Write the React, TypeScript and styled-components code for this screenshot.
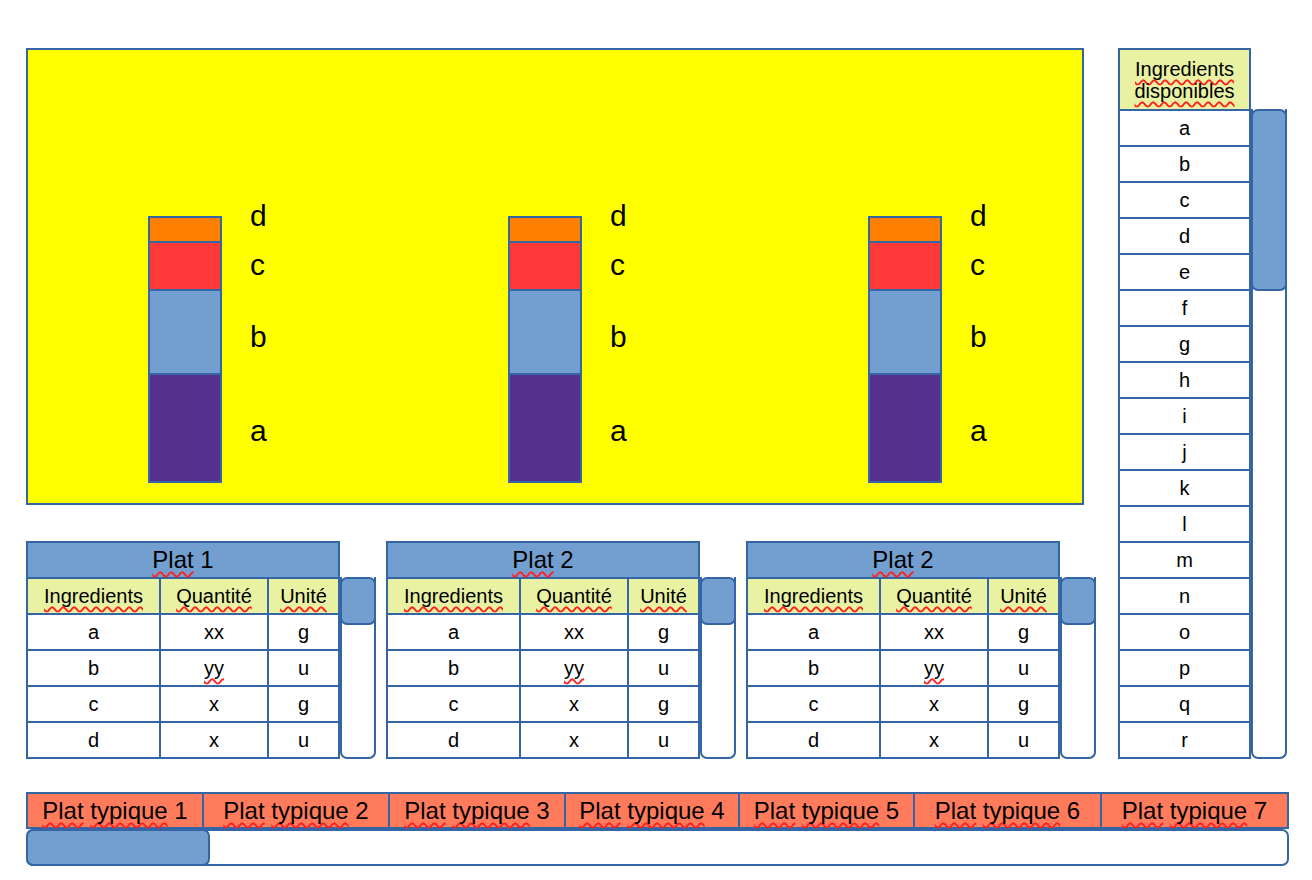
import styled, { createGlobalStyle } from 'styled-components';

const LINE = '#3465a4';
const BLUE = '#729fcf';

const GlobalStyle = createGlobalStyle`
  body {
    margin: 0;
    background: #ffffff;
    font-family: 'Liberation Sans', Arial, sans-serif;
    color: #000000;
  }
`;

const FLAGGED = new Set(['Plat', 'Ingredients', 'Quantité', 'Unité', 'yy', 'disponibles', 'typique']);

function spell(text: string) {
  return (
    <span>
      {text.split(' ').map((word, i) => (
        <span key={i}>
          {i > 0 && ' '}
          {FLAGGED.has(word) ? <Flagged>{word}</Flagged> : word}
        </span>
      ))}
    </span>
  );
}

const segments = [
  { color: '#ff8000', height: 23 },
  { color: '#ff3838', height: 46 },
  { color: BLUE, height: 82 },
  { color: '#55308d', height: 106 },
];

const labels = [
  { text: 'd', offset: 0 },
  { text: 'c', offset: 17 },
  { text: 'b', offset: 40 },
  { text: 'a', offset: 62 },
];

const dishRows = [
  ['a', 'xx', 'g'],
  ['b', 'yy', 'u'],
  ['c', 'x', 'g'],
  ['d', 'x', 'u'],
];

const dishes = ['Plat 1', 'Plat 2', 'Plat 2'];
const available = 'abcdefghijklmnopqr'.split('');
const typical = [174, 184, 174, 172, 173, 185, 185];

export default function App() {
  return (
    <>
      <GlobalStyle />
      <Page>
        <TopArea>
          <LeftColumn>
            <Panel>
              {[0, 1, 2].map((g) => (
                <BarGroup key={g}>
                  <Bar>
                    {segments.map((s, i) => (
                      <Segment key={i} color={s.color} h={s.height} />
                    ))}
                  </Bar>
                  <Labels>
                    {labels.map((l) => (
                      <Label key={l.text} offset={l.offset}>
                        {l.text}
                      </Label>
                    ))}
                  </Labels>
                </BarGroup>
              ))}
            </Panel>
            <TablesRow>
              {dishes.map((title, t) => (
                <TableGroup key={t}>
                  <DishTable>
                    <TitleCell>{spell(title)}</TitleCell>
                    <HeadCell>{spell('Ingredients')}</HeadCell>
                    <HeadCell>{spell('Quantité')}</HeadCell>
                    <HeadCell>{spell('Unité')}</HeadCell>
                    {dishRows.map((row) =>
                      row.map((v, c) => <Cell key={row[0] + c}>{spell(v)}</Cell>)
                    )}
                  </DishTable>
                  <VTrack h={182} offset={36}>
                    <VThumb h={48} />
                  </VTrack>
                </TableGroup>
              ))}
            </TablesRow>
          </LeftColumn>
          <RightColumn>
            <AvailableList>
              <ListHead>
                <span>
                  <Flagged>Ingredients</Flagged>
                  <br />
                  <Flagged>disponibles</Flagged>
                </span>
              </ListHead>
              {available.map((v) => (
                <Cell key={v}>{v}</Cell>
              ))}
            </AvailableList>
            <VTrack h={650} offset={61}>
              <VThumb h={182} />
            </VTrack>
          </RightColumn>
        </TopArea>
        <BottomArea>
          <TabsRow>
            {typical.map((w, i) => (
              <Tab key={i} style={{ width: w }}>
                {spell(`Plat typique ${i + 1}`)}
              </Tab>
            ))}
          </TabsRow>
          <HTrack>
            <HThumb />
          </HTrack>
        </BottomArea>
      </Page>
    </>
  );
}

const Flagged = styled.span`
  text-decoration-line: underline;
  text-decoration-style: wavy;
  text-decoration-color: #ff2020;
  text-decoration-thickness: 1.5px;
  text-underline-offset: 3px;
  text-decoration-skip-ink: none;
`;

const Page = styled.div`
  padding: 48px 0 0 26px;
`;

const TopArea = styled.div`
  display: flex;
  align-items: flex-start;
  gap: 22px;
`;

const LeftColumn = styled.div`
  width: 1070px;
  flex-shrink: 0;
  display: flex;
  flex-direction: column;
  gap: 36px;
`;

const Panel = styled.div`
  box-sizing: border-box;
  width: 1058px;
  height: 457px;
  border: 2px solid ${LINE};
  background: #ffff00;
  padding: 166px 0 0 120px;
  display: flex;
  overflow: hidden;
`;

const BarGroup = styled.div`
  width: 360px;
  flex-shrink: 0;
  display: flex;
  align-items: flex-start;
`;

const Bar = styled.div`
  width: 74px;
  box-sizing: border-box;
  padding: 2px;
  background: ${LINE};
  display: flex;
  flex-direction: column;
  gap: 2px;
`;

const Segment = styled.div<{ color: string; h: number }>`
  height: ${({ h }) => h}px;
  background: ${({ color }) => color};
`;

const Labels = styled.div`
  margin: -16px 0 0 28px;
  display: flex;
  flex-direction: column;
`;

const Label = styled.div<{ offset: number }>`
  margin-top: ${({ offset }) => offset}px;
  height: 32px;
  line-height: 32px;
  font-size: 30px;
`;

const TablesRow = styled.div`
  display: flex;
  gap: 10px;
`;

const TableGroup = styled.div`
  display: flex;
  align-items: flex-start;
`;

const DishTable = styled.div`
  display: grid;
  grid-template-columns: 131px 106px 69px;
  grid-auto-rows: 34px;
  gap: 2px;
  padding: 2px;
  background: ${LINE};
`;

const Cell = styled.div`
  background: #ffffff;
  display: flex;
  align-items: center;
  justify-content: center;
  font-size: 20px;
  white-space: nowrap;
`;

const TitleCell = styled(Cell)`
  grid-column: 1 / 4;
  background: ${BLUE};
  font-size: 24px;
`;

const HeadCell = styled(Cell)`
  background: #e8f2a2;
`;

const VTrack = styled.div<{ h: number; offset: number }>`
  box-sizing: border-box;
  width: 36px;
  height: ${({ h }) => h}px;
  margin-top: ${({ offset }) => offset}px;
  border: 2px solid ${LINE};
  border-top: none;
  border-radius: 0 0 7px 7px;
  background: #ffffff;
`;

const VThumb = styled.div<{ h: number }>`
  box-sizing: border-box;
  height: ${({ h }) => h}px;
  margin: 0 -2px;
  background: ${BLUE};
  border: 2px solid ${LINE};
  border-radius: 7px;
`;

const RightColumn = styled.div`
  display: flex;
  align-items: flex-start;
`;

const AvailableList = styled.div`
  display: grid;
  grid-template-columns: 129px;
  grid-template-rows: 59px;
  grid-auto-rows: 34px;
  gap: 2px;
  padding: 2px;
  background: ${LINE};
`;

const ListHead = styled(Cell)`
  background: #e8f2a2;
  line-height: 22px;
  text-align: center;
`;

const BottomArea = styled.div`
  margin-top: 33px;
  width: 1263px;
`;

const TabsRow = styled.div`
  display: flex;
  gap: 2px;
  padding: 2px;
  background: ${LINE};
`;

const Tab = styled.div`
  height: 33px;
  background: #ff7b5c;
  display: flex;
  align-items: center;
  justify-content: center;
  font-size: 24px;
  white-space: nowrap;
`;

const HTrack = styled.div`
  box-sizing: border-box;
  height: 37px;
  border: 2px solid ${LINE};
  border-left: none;
  border-radius: 7px;
  background: #ffffff;
  display: flex;
`;

const HThumb = styled.div`
  box-sizing: border-box;
  width: 184px;
  margin: -2px 0;
  background: ${BLUE};
  border: 2px solid ${LINE};
  border-radius: 7px;
`;
